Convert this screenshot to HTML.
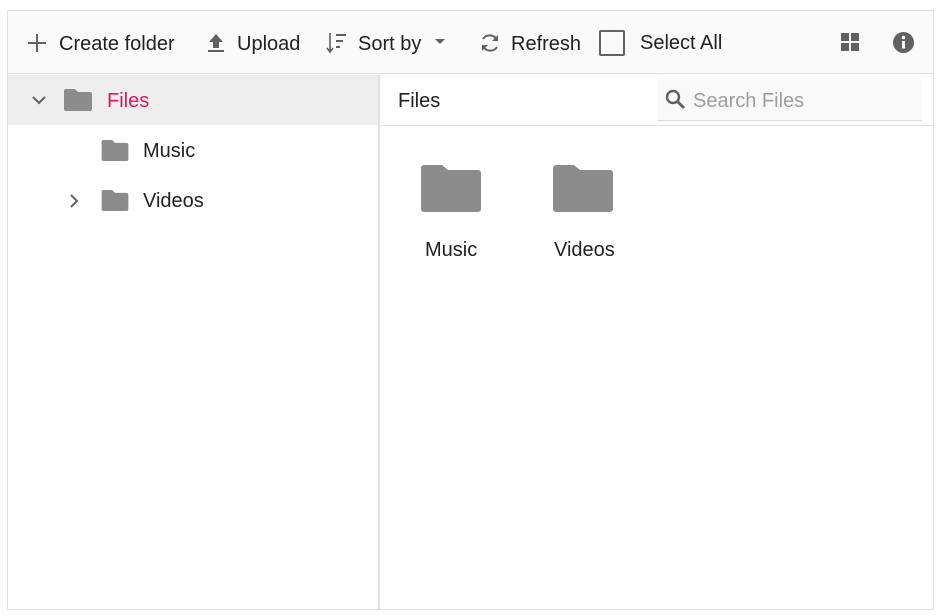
<!DOCTYPE html>
<html><head><style>
*{margin:0;padding:0;box-sizing:border-box}
body{width:940px;height:616px;background:#fff;font-family:"Liberation Sans",sans-serif;color:#212121;position:relative;overflow:hidden}
.a{position:absolute;white-space:nowrap}
.t{font-size:20px;line-height:24px}
</style></head><body>
<div class="a" style="left:7px;top:10px;width:927px;height:600px;border:1px solid #e0e0e0"></div>
<div class="a" style="left:8px;top:11px;width:925px;height:63px;background:#fafafa;border-bottom:1px solid #e0e0e0"></div>
<svg class="a" style="left:27px;top:33px" width="20" height="20" viewBox="0 0 20 20"><path d="M10 1v18M1 10h18" stroke="#616161" stroke-width="2"/></svg>
<div class="a t" style="left:59px;top:32px">Create folder</div>
<svg class="a" style="left:206px;top:32px" width="20" height="22" viewBox="0 0 20 22"><path d="M10 2L3 10h4v6h6v-6h4z" fill="#616161"/><rect x="2" y="18" width="16" height="2" fill="#616161"/></svg>
<div class="a t" style="left:237px;top:32px">Upload</div>
<svg class="a" style="left:326px;top:32px" width="22" height="22" viewBox="0 0 22 22"><path d="M4 1v18M1 16l3 4 3-4" stroke="#616161" stroke-width="1.6" fill="none"/><path d="M10 3h10M10 9h7M10 15h4" stroke="#616161" stroke-width="2"/></svg>
<div class="a t" style="left:358px;top:32px">Sort by</div>
<svg class="a" style="left:434px;top:38px" width="12" height="8"><path d="M1 1h10L6 6z" fill="#616161"/></svg>
<svg class="a" style="left:478px;top:31px" width="24" height="24" viewBox="0 0 24 24"><path d="M19 9A8 8 0 0 0 5 8M5 15a8 8 0 0 0 14 1" stroke="#616161" stroke-width="2" fill="none"/><path d="M20 4v6h-6z" fill="#616161"/><path d="M4 20v-6h6z" fill="#616161"/></svg>
<div class="a t" style="left:511px;top:32px">Refresh</div>
<div class="a" style="left:599px;top:30px;width:26px;height:26px;border:2px solid #616161;border-radius:2px"></div>
<div class="a t" style="left:640px;top:31px">Select All</div>
<svg class="a" style="left:841px;top:33px" width="19" height="19"><rect x="0" y="0" width="8" height="8" fill="#616161"/><rect x="10" y="0" width="8" height="8" fill="#616161"/><rect x="0" y="10" width="8" height="8" fill="#616161"/><rect x="10" y="10" width="8" height="8" fill="#616161"/></svg>
<svg class="a" style="left:893px;top:32px" width="21" height="21" viewBox="0 0 21 21"><circle cx="10.5" cy="10.5" r="10.5" fill="#616161"/><circle cx="10.5" cy="5.5" r="1.7" fill="#fff"/><rect x="9" y="9" width="3" height="7.5" fill="#fff"/></svg>
<div class="a" style="left:8px;top:75px;width:370px;height:50px;background:#eeeeee"></div>
<div class="a" style="left:378px;top:75px;width:2px;height:534px;background:#e0e0e0"></div>
<svg class="a" style="left:31px;top:95px" width="16" height="10"><path d="M2 2l6 6 6-6" stroke="#616161" stroke-width="2" fill="none"/></svg>
<svg class="a" style="left:64px;top:89px" width="28" height="22" viewBox="0 0 28 22"><path d="M2 0h9l3 3h12a2 2 0 0 1 2 2v15a2 2 0 0 1-2 2H2a2 2 0 0 1-2-2V2a2 2 0 0 1 2-2z" fill="#8c8c8c"/></svg>
<div class="a t" style="left:107px;top:89px;color:#e3165b">Files</div>
<svg class="a" style="left:101px;top:140px" width="28" height="21" viewBox="0 0 28 22"><path d="M2 0h9l3 3h12a2 2 0 0 1 2 2v15a2 2 0 0 1-2 2H2a2 2 0 0 1-2-2V2a2 2 0 0 1 2-2z" fill="#8c8c8c"/></svg>
<div class="a t" style="left:143px;top:139px">Music</div>
<svg class="a" style="left:69px;top:193px" width="10" height="16"><path d="M2 2l6 6-6 6" stroke="#616161" stroke-width="2" fill="none"/></svg>
<svg class="a" style="left:101px;top:190px" width="28" height="21" viewBox="0 0 28 22"><path d="M2 0h9l3 3h12a2 2 0 0 1 2 2v15a2 2 0 0 1-2 2H2a2 2 0 0 1-2-2V2a2 2 0 0 1 2-2z" fill="#8c8c8c"/></svg>
<div class="a t" style="left:143px;top:189px">Videos</div>
<div class="a" style="left:380px;top:125px;width:553px;height:1px;background:#e0e0e0"></div>
<div class="a t" style="left:398px;top:89px">Files</div>
<div class="a" style="left:657px;top:78px;width:265px;height:43px;background:#f9f9f9;border-bottom:1px solid #dcdcdc"></div>
<svg class="a" style="left:665px;top:89px" width="22" height="22" viewBox="0 0 22 22"><circle cx="8" cy="8" r="6" stroke="#616161" stroke-width="2.4" fill="none"/><path d="M12.5 12.5L19 19" stroke="#616161" stroke-width="3"/></svg>
<div class="a t" style="left:693px;top:89px;color:#9e9e9e">Search Files</div>
<svg class="a" style="left:421px;top:165px" width="60" height="47" viewBox="0 0 60 47"><path d="M3 0h18l6 5h30a3 3 0 0 1 3 3v36a3 3 0 0 1-3 3H3a3 3 0 0 1-3-3V3a3 3 0 0 1 3-3z" fill="#8c8c8c"/></svg>
<div class="a t" style="left:425px;top:238px">Music</div>
<svg class="a" style="left:553px;top:165px" width="60" height="47" viewBox="0 0 60 47"><path d="M3 0h18l6 5h30a3 3 0 0 1 3 3v36a3 3 0 0 1-3 3H3a3 3 0 0 1-3-3V3a3 3 0 0 1 3-3z" fill="#8c8c8c"/></svg>
<div class="a t" style="left:554px;top:238px">Videos</div>
</body></html>
